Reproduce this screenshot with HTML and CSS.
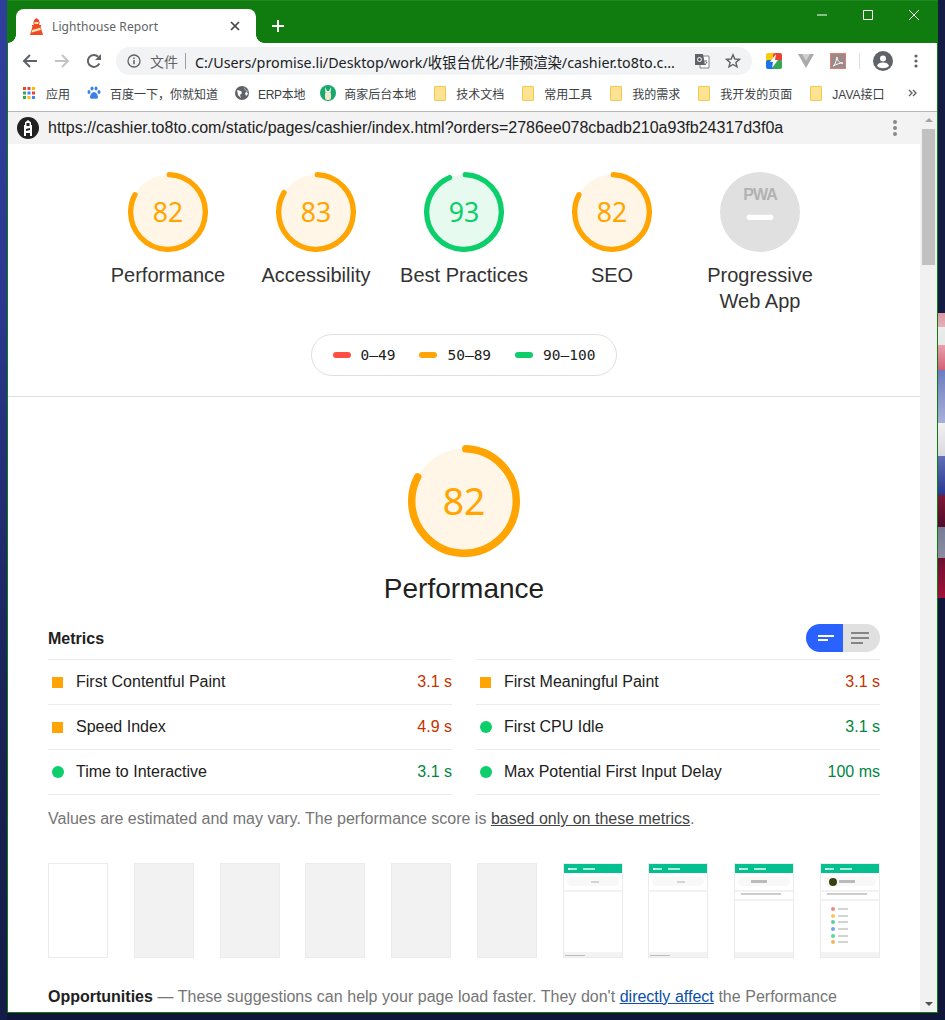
FILE: index.html
```html
<!DOCTYPE html>
<html lang="en">
<head>
    <meta charset="UTF-8">
    <title>Lighthouse Report</title>
    <link rel="stylesheet" href="styles.css">
</head>
<body>
    <div class="window">
        <div class="titlebar">
            <div class="tab">
                <svg class="tab-icon" width="13" height="17" viewBox="0 0 13 17"><path fill="#ef4a25" d="M6.500 0L9 2v1H4V2z"/><path fill="#ffe3b0" stroke="#ef4a25" d="M4 3.500h5v3H4z"/><path fill="#ef4a25" d="M2 7h9v1.500h-.5L13 17H0l2.500-8.500H2z"/><path fill="#ffe3b0" d="M2.200 12l8-2.200.6 2.200-9.300 2.500z"/></svg>
                <span class="tab-title">Lighthouse Report</span>
                <svg class="tab-close" width="10" height="10" viewBox="0 0 10 10"><path d="M1 1l8 8M9 1l-8 8" stroke="#444" stroke-width="1.7"/></svg>
            </div>
            <svg class="new-tab" width="12" height="12" viewBox="0 0 12 12"><path d="M6 0v12M0 6h12" stroke="#fff" stroke-width="2"/></svg>
            <div class="win-buttons">
                <svg width="10" height="10" viewBox="0 0 10 10"><path d="M0 5h10" stroke="#fff"/></svg>
                <svg width="10" height="10" viewBox="0 0 10 10"><path d="M.5.5h9v9h-9z" fill="none" stroke="#fff"/></svg>
                <svg width="10" height="10" viewBox="0 0 10 10"><path d="M0 0l10 10M10 0L0 10" stroke="#fff"/></svg>
            </div>
        </div>

        <div class="toolbar">
            <svg class="nav-icon" width="16" height="16" viewBox="0 0 16 16"><path d="M15 8H2M8 2L2 8l6 6" fill="none" stroke="#5f6368" stroke-width="2"/></svg>
            <svg class="nav-icon" width="16" height="16" viewBox="0 0 16 16"><path d="M1 8h13M8 2l6 6-6 6" fill="none" stroke="#c1c3c6" stroke-width="2"/></svg>
            <svg class="nav-icon" width="16" height="16" viewBox="0 0 16 16"><path d="M13.300 10.500A6 6 0 1 1 12.200 3.700" fill="none" stroke="#5f6368" stroke-width="2"/><path d="M15 1v6H9z" fill="#5f6368"/></svg>
            <div class="omnibox">
                <svg width="14" height="14" viewBox="0 0 14 14"><circle cx="7" cy="7" r="6" fill="none" stroke="#5f6368" stroke-width="1.3"/><path d="M7 6v4.200M7 3.500v1.400" stroke="#5f6368" stroke-width="1.5"/></svg>
                <span class="omni-file">文件</span>
                <span class="omni-sep"></span>
                <span class="omni-url">C:/Users/promise.li/Desktop/work/收银台优化/非预渲染/cashier.to8to.c...</span>
                <svg class="omni-translate" width="16" height="16" viewBox="0 0 16 16"><path d="M6 3h9v12H6z" fill="#fff" stroke="#80868b"/><path d="M1 1h8l2 11H1z" fill="#5f6368"/><circle cx="5.500" cy="6.500" r="2" fill="none" stroke="#fff"/><path d="M10 8h3M11 12l2-3" stroke="#5f6368"/></svg>
                <svg class="omni-star" width="16" height="16" viewBox="0 0 16 16"><path d="M8 1.800l1.800 4.200 4.600.4-3.500 3 1.100 4.500L8 11.500l-4 2.400 1.100-4.500-3.500-3 4.600-.4z" fill="none" stroke="#5f6368" stroke-width="1.4"/></svg>
            </div>
            <div class="extensions">
                <svg width="16" height="16" viewBox="0 0 16 16"><rect width="9" height="9" rx="2" fill="#fbcb0a"/><rect x="7" width="9" height="9" rx="2" fill="#ea4335"/><rect y="7" width="9" height="9" rx="2" fill="#1a73e8"/><rect x="7" y="7" width="9" height="9" rx="2" fill="#34a853"/><path d="M10 1L4 9h3l-1 6 6-8H9z" fill="#fff"/></svg>
                <svg width="16" height="14" viewBox="0 0 16 14"><path d="M0 0h16L8 14z" fill="#a9a9a9"/><path d="M4 0h8L8 7z" fill="#d0d0d0"/></svg>
                <svg width="16" height="16" viewBox="0 0 16 16"><rect x=".5" y=".5" width="15" height="15" fill="#9b8a88" stroke="#e07f78"/><path d="M3 13c2-1 3-4 4-9 0 3 2 6 6 6-3 0-6 1-10 3z" fill="none" stroke="#fff"/></svg>
                <span class="ext-sep"></span>
                <svg width="20" height="20" viewBox="0 0 20 20"><circle cx="10" cy="10" r="10" fill="#5f6368"/><circle cx="10" cy="7.500" r="3" fill="#fff"/><path d="M4 15c1-3 3.500-3.500 6-3.500s5 .5 6 3.500c-3 3-9 3-12 0z" fill="#fff"/></svg>
                <svg class="ext-menu" width="4" height="14" viewBox="0 0 4 14"><circle cx="2" cy="2" r="1.600" fill="#5f6368"/><circle cx="2" cy="7" r="1.600" fill="#5f6368"/><circle cx="2" cy="12" r="1.600" fill="#5f6368"/></svg>
            </div>
        </div>

        <div class="bookmarks">
            <a class="bm"><svg width="12" height="12" viewBox="0 0 12 12"><rect width="3" height="3" fill="#ea4335"/><rect x="4.500" width="3" height="3" fill="#ea4335"/><rect x="9" width="3" height="3" fill="#fbbc05"/><rect y="4.500" width="3" height="3" fill="#34a853"/><rect x="4.500" y="4.500" width="3" height="3" fill="#4285f4"/><rect x="9" y="4.500" width="3" height="3" fill="#ea4335"/><rect y="9" width="3" height="3" fill="#34a853"/><rect x="4.500" y="9" width="3" height="3" fill="#fbbc05"/><rect x="9" y="9" width="3" height="3" fill="#4285f4"/></svg>应用</a>
            <a class="bm bm-baidu"><svg width="14" height="14" viewBox="0 0 14 14" fill="#3b82e8"><ellipse cx="2" cy="6" rx="1.500" ry="2"/><ellipse cx="5" cy="2.500" rx="1.500" ry="2"/><ellipse cx="9" cy="2.500" rx="1.500" ry="2"/><ellipse cx="12" cy="6" rx="1.500" ry="2"/><path d="M7 6c-2 0-4 3-4 5s2 2 4 1.500c2 .5 4 .5 4-1.500s-2-5-4-5z"/></svg>百度一下，你就知道</a>
            <a class="bm bm-erp"><svg width="14" height="14" viewBox="0 0 14 14"><circle cx="7" cy="7" r="7" fill="#5f6368"/><path d="M2 4l4 1 1 2-2 2 1 3-3-3zM9 1l1 3 3 1-3 2 1 3 2-2" fill="#fff"/></svg>ERP本地</a>
            <a class="bm bm-store"><svg width="16" height="16" viewBox="0 0 16 16"><circle cx="8" cy="8" r="8" fill="#17a86b"/><path d="M5 2l2 4h2l2-4-.5 5.500h-5z" fill="#fff"/><rect x="5" y="7" width="6" height="8" rx="2" fill="#f2e6cc"/></svg>商家后台本地</a>
            <a class="bm bm-folder"><span class="folder"></span>技术文档</a>
            <a class="bm bm-folder"><span class="folder"></span>常用工具</a>
            <a class="bm bm-folder"><span class="folder"></span>我的需求</a>
            <a class="bm bm-folder"><span class="folder"></span>我开发的页面</a>
            <a class="bm bm-folder"><span class="folder"></span>JAVA接口</a>
            <svg class="bm-more" width="9" height="8" viewBox="0 0 9 8"><path d="M1 1l3 3-3 3M5 1l3 3-3 3" fill="none" stroke="#5f6368" stroke-width="1.4"/></svg>
        </div>

        <div class="viewport">
            <div class="page">
                <div class="lh-topbar">
                    <svg width="22" height="22" viewBox="0 0 22 22"><circle cx="11" cy="11" r="11" fill="#212121"/><path d="M11 3l3 2.500V8h1v11H7V8h1V5.500z" fill="#fff"/><path d="M9.500 6h3v3h-3zM9 12l4-1v2l-4 1zM9 16h4v3H9z" fill="#212121"/></svg>
                    <span class="lh-url">https://cashier.to8to.com/static/pages/cashier/index.html?orders=2786ee078cbadb210a93fb24317d3f0a</span>
                    <span class="lh-menu"><i></i><i></i><i></i></span>
                </div>

                <div class="gauges">
                    <div class="gauge-item">
                        <svg class="gauge" viewBox="0 0 120 120"><circle class="bg-avg" cx="60" cy="60" r="56"/><circle class="arc-avg" cx="60" cy="60" r="56" stroke-dasharray="288.5 352" transform="rotate(-88 60 60)"/><text class="score-avg" x="60" y="75">82</text></svg>
                        <div class="gauge-label">Performance</div>
                    </div>
                    <div class="gauge-item">
                        <svg class="gauge" viewBox="0 0 120 120"><circle class="bg-avg" cx="60" cy="60" r="56"/><circle class="arc-avg" cx="60" cy="60" r="56" stroke-dasharray="292 352" transform="rotate(-88 60 60)"/><text class="score-avg" x="60" y="75">83</text></svg>
                        <div class="gauge-label">Accessibility</div>
                    </div>
                    <div class="gauge-item">
                        <svg class="gauge" viewBox="0 0 120 120"><circle class="bg-pass" cx="60" cy="60" r="56"/><circle class="arc-pass" cx="60" cy="60" r="56" stroke-dasharray="327 352" transform="rotate(-88 60 60)"/><text class="score-pass" x="60" y="75">93</text></svg>
                        <div class="gauge-label">Best Practices</div>
                    </div>
                    <div class="gauge-item">
                        <svg class="gauge" viewBox="0 0 120 120"><circle class="bg-avg" cx="60" cy="60" r="56"/><circle class="arc-avg" cx="60" cy="60" r="56" stroke-dasharray="288.5 352" transform="rotate(-88 60 60)"/><text class="score-avg" x="60" y="75">82</text></svg>
                        <div class="gauge-label">SEO</div>
                    </div>
                    <div class="gauge-item">
                        <svg class="gauge" viewBox="0 0 120 120"><circle cx="60" cy="60" r="60" fill="#e0e0e0"/><text class="pwa-text" x="60" y="42">PWA</text><rect x="40" y="64" width="40" height="8" rx="4" fill="#fff"/></svg>
                        <div class="gauge-label">Progressive<br>Web App</div>
                    </div>
                </div>

                <div class="legend">
                    <span class="legend-item"><i class="dash dash-fail"></i>0–49</span>
                    <span class="legend-item"><i class="dash dash-avg"></i>50–89</span>
                    <span class="legend-item"><i class="dash dash-pass"></i>90–100</span>
                </div>

                <div class="category">
                    <div class="big-gauge-wrap">
                        <svg class="big-gauge" viewBox="0 0 120 120"><circle class="bg-avg" cx="60" cy="60" r="56"/><circle class="arc-avg" cx="60" cy="60" r="56" stroke-dasharray="288.5 352" transform="rotate(-88 60 60)"/><text class="score-avg" x="60" y="75">82</text></svg>
                        <div class="big-title">Performance</div>
                    </div>

                    <div class="metrics-head">
                        <span class="metrics-title">Metrics</span>
                        <div class="toggle">
                            <span class="toggle-on"><svg width="16" height="12" viewBox="0 0 16 12"><path d="M0 4h16M0 8h10" stroke="#fff" stroke-width="2"/></svg></span>
                            <span class="toggle-off"><svg width="18" height="12" viewBox="0 0 18 12"><path d="M0 1h18M0 6h18M0 11h12" stroke="#858585" stroke-width="2"/></svg></span>
                        </div>
                    </div>

                    <div class="metrics">
                        <div class="metric"><i class="ic-square"></i><span class="m-name">First Contentful Paint</span><span class="m-val val-avg">3.1 s</span></div>
                        <div class="metric"><i class="ic-square"></i><span class="m-name">First Meaningful Paint</span><span class="m-val val-avg">3.1 s</span></div>
                        <div class="metric"><i class="ic-square"></i><span class="m-name">Speed Index</span><span class="m-val val-avg">4.9 s</span></div>
                        <div class="metric"><i class="ic-dot"></i><span class="m-name">First CPU Idle</span><span class="m-val val-pass">3.1 s</span></div>
                        <div class="metric"><i class="ic-dot"></i><span class="m-name">Time to Interactive</span><span class="m-val val-pass">3.1 s</span></div>
                        <div class="metric"><i class="ic-dot"></i><span class="m-name">Max Potential First Input Delay</span><span class="m-val val-pass">100 ms</span></div>
                    </div>

                    <p class="note">Values are estimated and may vary. The performance score is <a href="#">based only on these metrics</a>.</p>

                    <div class="film">
                        <div class="frame"></div>
                        <div class="frame frame-grey"></div>
                        <div class="frame frame-grey"></div>
                        <div class="frame frame-grey"></div>
                        <div class="frame frame-grey"></div>
                        <div class="frame frame-grey"></div>
                        <div class="frame">
                            <div class="th-bar"><i></i><i></i></div>
                            <div class="th-pill th-pill-empty"><i class="th-txt"></i></div>
                            <div class="th-line"></div>
                            <div class="th-foot"><i class="th-scroll"></i></div>
                        </div>
                        <div class="frame">
                            <div class="th-bar"><i></i><i></i></div>
                            <div class="th-pill th-pill-empty"><i class="th-txt"></i></div>
                            <div class="th-line"></div>
                            <div class="th-foot"><i class="th-scroll"></i></div>
                        </div>
                        <div class="frame">
                            <div class="th-bar"><i></i><i></i></div>
                            <div class="th-pill"><i class="th-name"></i></div>
                            <div class="th-line"></div>
                            <div class="th-note"></div>
                            <div class="th-line"></div>
                            <div class="th-foot"></div>
                        </div>
                        <div class="frame">
                            <div class="th-bar"><i></i><i></i></div>
                            <div class="th-pill"><i class="th-avatar"></i><i class="th-name"></i></div>
                            <div class="th-line"></div>
                            <div class="th-note"></div>
                            <div class="th-line"></div>
                            <div class="th-list">
                                <div class="th-row"><i style="background:#f08a80"></i><b></b></div>
                                <div class="th-row"><i style="background:#f5c65f"></i><b></b></div>
                                <div class="th-row"><i style="background:#5fcf95"></i><b></b></div>
                                <div class="th-row"><i style="background:#6ea8e8"></i><b></b></div>
                                <div class="th-row"><i style="background:#5fd3a0"></i><b></b></div>
                                <div class="th-row"><i style="background:#f2b660"></i><b></b></div>
                            </div>
                            <div class="th-foot"></div>
                        </div>
                    </div>

                    <p class="opps"><b>Opportunities</b> — These suggestions can help your page load faster. They don't <a href="#">directly affect</a> the Performance</p>
                </div>
            </div>
            <div class="scrollbar">
                <i class="arrow-up"></i>
                <div class="thumb"></div>
                <i class="arrow-down"></i>
            </div>
        </div>
    </div>
</body>
</html>
```

FILE: styles.css
```css
html, body {
    margin: 0;
    height: 1020px;
    overflow: hidden;
}

/* desktop wallpaper showing round the window */
body {
    font-family: "Liberation Sans", Arial, sans-serif;
    background-color: #10163a;
    background-image:
        linear-gradient(#2f3f9c 0, #2a3890 300px, #1a2258 700px, #141c48 1020px),
        linear-gradient(#141c44 0, #141c44 313px, #d99aa5 313px, #e4b0b8 327px, #e8ecec 327px, #e8e8e8 345px, #e8a0ac 345px, #d06078 370px, #6c7cc0 370px, #a8b0d8 423px, #f0f0f0 423px, #d8d8e0 456px, #6070b8 456px, #283890 495px, #801838 495px, #500c28 527px, #787c98 527px, #8c8ca0 558px, #6c1030 558px, #a01038 598px, #10163a 598px);
    background-size: 7px 100%, 7px 100%;
    background-position: left top, right top;
    background-repeat: no-repeat;
}

.window {
    box-sizing: border-box;
    width: 931px;
    height: 1013px;
    margin-left: 7px;
    border: 1px solid #107c10;
    border-top: none;
    display: flex;
    flex-direction: column;
    background: #fff;
}

/* title bar */
.titlebar {
    height: 43px;
    flex: none;
    background: #107c10;
    border-top: 1px solid #1f8a1f;
    box-sizing: border-box;
    display: flex;
    align-items: flex-end;
    padding-left: 8px;
}

.tab {
    width: 240px;
    height: 34px;
    background: #fff;
    border-radius: 8px 8px 0 0;
    box-sizing: border-box;
    padding: 0 16px 0 14px;
    display: flex;
    align-items: center;
    font-size: 12px;
    color: #5f6368;
    position: relative;
}

/* the little curves where the tab meets the toolbar */
.tab::before,
.tab::after {
    content: "";
    position: absolute;
    bottom: 0;
    width: 8px;
    height: 8px;
}

.tab::before {
    left: -8px;
    background: radial-gradient(circle at 0 0, transparent 7.5px, #fff 8px);
}

.tab::after {
    right: -8px;
    background: radial-gradient(circle at 100% 0, transparent 7.5px, #fff 8px);
}

.tab-title {
    margin-left: 9px;
    flex: 1;
    font-family: "Noto Sans", sans-serif;
    font-size: 12px;
    letter-spacing: 0.1px;
}

.new-tab {
    margin: 0 0 11px 16px;
}

.win-buttons {
    margin-left: auto;
    align-self: flex-start;
    display: flex;
    gap: 36px;
    padding: 9px 18px 0 0;
}

/* toolbar */
.toolbar {
    height: 32px;
    flex: none;
    box-sizing: border-box;
    display: flex;
    align-items: center;
    padding: 4px 17px 0 14px;
}

.nav-icon {
    margin-right: 16px;
}

.nav-icon:nth-child(3) {
    margin-right: 14px;
}

.omnibox {
    width: 636px;
    height: 28px;
    box-sizing: border-box;
    background: #f1f3f4;
    border-radius: 14px;
    padding: 0 11px;
    display: flex;
    align-items: center;
    font-family: "Noto Sans", "Noto Sans CJK SC", sans-serif;
    font-size: 14.3px;
    color: #202124;
    flex: none;
}

.omni-file {
    margin-left: 9px;
    color: #5f6368;
    font-family: "Noto Sans CJK SC", sans-serif;
    font-size: 14px;
}

.omni-sep {
    width: 1px;
    height: 16px;
    background: #9aa0a6;
    margin: 0 9px 0 7px;
}

.omni-url {
    flex: 1;
    white-space: nowrap;
    overflow: hidden;
}

.omni-translate {
    margin: 0 15px 0 4px;
}

.extensions {
    display: flex;
    align-items: center;
    margin-left: 14px;
    gap: 16px;
    flex: 1;
}

.ext-sep {
    width: 1px;
    height: 16px;
    background: #ddd;
    margin: 0 -3px;
}

.ext-menu {
    margin-left: 5px;
}

/* bookmarks */
.bookmarks {
    height: 37px;
    flex: none;
    box-sizing: border-box;
    border-bottom: 1px solid #b8b8b8;
    display: flex;
    align-items: center;
    padding-left: 15px;
    font-family: "Liberation Sans", "Noto Sans CJK SC", sans-serif;
    font-size: 12px;
    color: #3c4043;
}

.bm {
    display: flex;
    align-items: center;
    gap: 11px;
    margin-right: 17px;
    white-space: nowrap;
}

.bm-baidu {
    gap: 9px;
}

.bm-erp {
    gap: 9px;
    margin-right: 15px;
    letter-spacing: -0.3px;
}

.bm-store {
    gap: 8px;
    margin-right: 18px;
}

.bm-folder {
    gap: 10px;
    margin-right: 18px;
}

.folder {
    width: 10px;
    height: 13px;
    background: #fde293;
    border: 1px solid #f0c94f;
    border-radius: 1px;
}

.bm-more {
    margin-left: 5px;
}

/* report */
.viewport {
    flex: 1;
    min-height: 0;
    display: flex;
}

.page {
    width: 912px;
    flex: none;
    overflow: hidden;
}

.lh-topbar {
    height: 32px;
    background: #f3f3f3;
    display: flex;
    align-items: center;
    padding: 0 23px 0 9px;
    font-size: 16px;
    color: #212121;
}

.lh-url {
    margin-left: 9px;
    flex: 1;
    white-space: nowrap;
}

.lh-menu {
    display: flex;
    flex-direction: column;
    gap: 2px;
}

.lh-menu i {
    width: 4px;
    height: 4px;
    border-radius: 50%;
    background: #8a8a8a;
}

.gauges {
    display: flex;
    justify-content: center;
    padding-top: 28px;
}

.gauge-item {
    width: 148px;
    display: flex;
    flex-direction: column;
    align-items: center;
}

.gauge {
    width: 80px;
    height: 80px;
    display: block;
}

.gauge-label {
    margin-top: 10px;
    font-size: 20px;
    line-height: 26px;
    color: #333;
    text-align: center;
    white-space: nowrap;
}

.bg-avg {
    fill: #fff6e7;
}

.bg-pass {
    fill: #e7faf0;
}

.arc-avg,
.arc-pass {
    fill: none;
    stroke-width: 8;
    stroke-linecap: round;
}

.arc-avg {
    stroke: #ffa400;
}

.arc-pass {
    stroke: #0cce6b;
}

.score-avg,
.score-pass {
    font-family: "Noto Sans", sans-serif;
    font-size: 40px;
    text-anchor: middle;
}

.score-avg {
    fill: #ffa400;
}

.score-pass {
    fill: #0cce6b;
}

.pwa-text {
    font-family: "Liberation Sans", sans-serif;
    font-size: 24px;
    font-weight: bold;
    letter-spacing: -1.5px;
    fill: #b2b2b2;
    text-anchor: middle;
}

.legend {
    width: 306px;
    height: 42px;
    box-sizing: border-box;
    margin: 20px auto 20px;
    border: 1px solid #e0e0e0;
    border-radius: 21px;
    display: flex;
    align-items: center;
    justify-content: center;
    gap: 24px;
    font-family: "DejaVu Sans Mono", monospace;
    font-size: 14.5px;
    color: #212121;
}

.legend-item {
    display: flex;
    align-items: center;
    gap: 10px;
}

.dash {
    width: 18px;
    height: 6px;
    border-radius: 3px;
}

.dash-fail {
    background: #ff4e42;
}

.dash-avg {
    background: #ffa400;
}

.dash-pass {
    background: #0cce6b;
}

.category {
    border-top: 1px solid #e0e0e0;
    padding: 48px 40px 0;
}

.big-gauge-wrap {
    text-align: center;
}

.big-gauge {
    width: 112px;
    height: 112px;
    display: block;
    margin: 0 auto;
}

.big-title {
    margin-top: 14px;
    font-size: 28px;
    line-height: 36px;
    color: #212121;
}

.metrics-head {
    margin-top: 17px;
    height: 35px;
    display: flex;
    align-items: flex-start;
    justify-content: space-between;
}

.metrics-title {
    font-size: 16px;
    font-weight: bold;
    line-height: 30px;
    color: #212121;
}

.toggle {
    width: 74px;
    height: 28px;
    border-radius: 14px;
    overflow: hidden;
    display: flex;
}

.toggle-on,
.toggle-off {
    width: 37px;
    box-sizing: border-box;
    display: flex;
    align-items: center;
    justify-content: center;
}

.toggle-on {
    background: #2962ff;
    padding-left: 3px;
}

.toggle-off {
    background: #e0e0e0;
    padding-right: 3px;
}

.metrics {
    display: grid;
    grid-template-columns: 404px 404px;
    column-gap: 24px;
}

.metric {
    height: 45px;
    box-sizing: border-box;
    border-top: 1px solid #ebebeb;
    display: flex;
    align-items: center;
    font-size: 16px;
    color: #212121;
}

.metric:nth-child(n+5) {
    height: 46px;
    border-bottom: 1px solid #ebebeb;
}

.ic-square {
    width: 11px;
    height: 11px;
    margin: 0 13px 0 4px;
    background: #ffa400;
}

.ic-dot {
    width: 12px;
    height: 12px;
    margin: 0 12px 0 4px;
    border-radius: 50%;
    background: #0cce6b;
}

.m-name {
    flex: 1;
}

.val-avg {
    color: #c33300;
}

.val-pass {
    color: #018642;
}

.note {
    margin: 15px 0 0;
    font-size: 16px;
    line-height: 18px;
    color: #757575;
}

.note a {
    color: #444;
}

/* filmstrip */
.film {
    margin-top: 35px;
    display: flex;
    justify-content: space-between;
}

.frame {
    width: 60px;
    height: 95px;
    box-sizing: border-box;
    border: 1px solid #ebebeb;
    background: #fff;
    position: relative;
    overflow: hidden;
}

.frame-grey {
    background: #f2f2f2;
}

.th-bar {
    height: 9px;
    background: #04c090;
    display: flex;
    align-items: center;
    gap: 6px;
    padding-left: 4px;
}

.th-bar i {
    width: 7px;
    height: 2px;
    background: #a8eeda;
}

.th-bar i:first-child {
    border-left: 2px solid #fff;
}

.th-bar i:last-child {
    width: 12px;
}

.th-pill {
    height: 9px;
    margin: 4px 3px 0;
    border-radius: 5px;
    background: #f8f8f8;
    display: flex;
    align-items: center;
    gap: 2px;
    padding-left: 5px;
}

.th-pill-empty {
    justify-content: center;
}

.th-txt {
    width: 8px;
    height: 2px;
    background: #d4d4d4;
}

.th-avatar {
    width: 8px;
    height: 8px;
    border-radius: 50%;
    background: #3c4010;
}

.th-name {
    width: 16px;
    height: 3px;
    margin-left: 8px;
    background: #bbb;
}

.th-avatar + .th-name {
    margin-left: 0;
}

.th-line {
    height: 2px;
    margin-top: 4px;
    background: #f2f2f2;
}

.th-note {
    height: 2px;
    margin: 1px 12px 0 6px;
    background: #ccc;
}

.th-list {
    margin-top: 5px;
    padding: 0 4px 0 10px;
}

.th-row {
    height: 6.6px;
    display: flex;
    align-items: center;
    gap: 3px;
}

.th-row i {
    width: 4px;
    height: 4px;
    border-radius: 50%;
}

.th-row b {
    width: 10px;
    height: 2px;
    background: #d4d4d4;
}

.th-foot {
    position: absolute;
    left: 0;
    right: 0;
    bottom: 0;
    height: 5px;
    background: #f3f3f3;
}

.th-scroll {
    display: block;
    width: 20px;
    height: 1px;
    margin: 3px 0 0 1px;
    background: #bbb;
}

.frame > * {
    filter: blur(0.6px);
}

.opps {
    margin: 30px 0 0;
    font-size: 16px;
    line-height: 18px;
    color: #757575;
    white-space: nowrap;
    word-spacing: 0.15px;
}

.opps b {
    color: #212121;
}

.opps a {
    color: #0b4fa8;
}

/* scrollbar */
.scrollbar {
    width: 17px;
    background: #f1f1f1;
    flex: 1;
    display: flex;
    flex-direction: column;
    align-items: center;
}

.thumb {
    width: 13px;
    height: 136px;
    margin-top: 7px;
    background: #c1c1c1;
}

.arrow-up,
.arrow-down {
    width: 0;
    height: 0;
    border-left: 4px solid transparent;
    border-right: 4px solid transparent;
}

.arrow-up {
    margin-top: 6px;
    border-bottom: 4px solid #a3a3a3;
}

.arrow-down {
    margin-top: auto;
    margin-bottom: 6px;
    border-top: 4px solid #505050;
}
```
